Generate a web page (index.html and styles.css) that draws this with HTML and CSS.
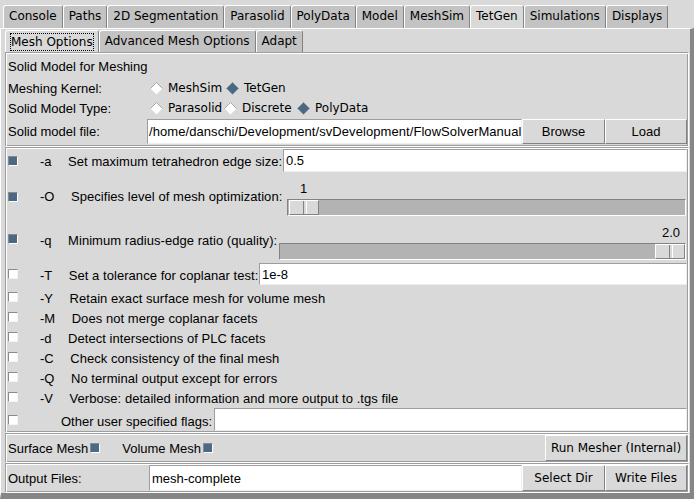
FILE: index.html
```html
<!DOCTYPE html>
<html>
<head>
<meta charset="utf-8">
<link rel="stylesheet" href="styles.css">
</head>
<body>
<div class="app">
  <div class="tabs tabs-main">
    <div class="tab">Console</div>
    <div class="tab">Paths</div>
    <div class="tab">2D Segmentation</div>
    <div class="tab">Parasolid</div>
    <div class="tab">PolyData</div>
    <div class="tab">Model</div>
    <div class="tab">MeshSim</div>
    <div class="tab sel">TetGen</div>
    <div class="tab">Simulations</div>
    <div class="tab">Displays</div>
  </div>
  <div class="pane-main">
    <div class="tabs tabs-sub">
      <div class="tab sel tab-focus"><span class="focus">Mesh Options</span></div>
      <div class="tab">Advanced Mesh Options</div>
      <div class="tab">Adapt</div>
    </div>
    <div class="pane-sub">
      <div class="sec sec-model">
        <div class="row title-row">Solid Model for Meshing</div>
        <div class="row radio-row">
          <span class="lbl">Meshing Kernel:</span>
          <span class="radio r-meshsim"><svg class="dia" width="13" height="13" viewBox="0 0 13 13"><polygon points="6.5,0.5 12.5,6.5 6.5,12.5 0.5,6.5" fill="#fff"/><polyline points="0.5,6.5 6.5,0.5 12.5,6.5" fill="none" stroke="#a8a8a8"/></svg>MeshSim</span>
          <span class="radio"><svg class="dia" width="13" height="13" viewBox="0 0 13 13"><polygon points="6.5,0.5 12.5,6.5 6.5,12.5 0.5,6.5" fill="#4a6984"/><polyline points="0.5,6.5 6.5,0.5 12.5,6.5" fill="none" stroke="#8a8a8a"/></svg>TetGen</span>
        </div>
        <div class="row radio-row">
          <span class="lbl">Solid Model Type:</span>
          <span class="radio r-parasolid"><svg class="dia" width="13" height="13" viewBox="0 0 13 13"><polygon points="6.5,0.5 12.5,6.5 6.5,12.5 0.5,6.5" fill="#fff"/><polyline points="0.5,6.5 6.5,0.5 12.5,6.5" fill="none" stroke="#a8a8a8"/></svg>Parasolid</span>
          <span class="radio r-discrete"><svg class="dia" width="13" height="13" viewBox="0 0 13 13"><polygon points="6.5,0.5 12.5,6.5 6.5,12.5 0.5,6.5" fill="#fff"/><polyline points="0.5,6.5 6.5,0.5 12.5,6.5" fill="none" stroke="#a8a8a8"/></svg>Discrete</span>
          <span class="radio r-polydata"><svg class="dia" width="13" height="13" viewBox="0 0 13 13"><polygon points="6.5,0.5 12.5,6.5 6.5,12.5 0.5,6.5" fill="#4a6984"/><polyline points="0.5,6.5 6.5,0.5 12.5,6.5" fill="none" stroke="#8a8a8a"/></svg>PolyData</span>
        </div>
        <div class="row file-row">
          <span class="lbl lbl-file">Solid model file:</span>
          <div class="entry entry-file">/home/danschi/Development/svDevelopment/FlowSolverManual</div>
          <div class="btn btn-w83">Browse</div>
          <div class="btn btn-w82">Load</div>
        </div>
      </div>

      <div class="sec sec-opts">
        <div class="row opt-a">
          <span class="cb on"></span><span class="flag">-a</span><span class="desc">Set maximum tetrahedron edge size:</span>
          <div class="entry entry-a">0.5</div>
        </div>
        <div class="row opt-scale opt-O">
          <span class="cb on"></span><span class="flag">-O</span><span class="desc">Specifies level of mesh optimization:</span>
          <div class="scale scale-O">
            <div class="scale-val"><span class="val val-O">1</span></div>
            <div class="trough"><div class="slider slider-min"></div></div>
          </div>
        </div>
        <div class="row opt-scale opt-q">
          <span class="cb on"></span><span class="flag">-q</span><span class="desc">Minimum radius-edge ratio (quality):</span>
          <div class="scale scale-q">
            <div class="scale-val"><span class="val val-q">2.0</span></div>
            <div class="trough"><div class="slider slider-max"></div></div>
          </div>
        </div>
        <div class="row opt-T">
          <span class="cb"></span><span class="flag">-T</span><span class="desc">Set a tolerance for coplanar test:</span>
          <div class="entry entry-T">1e-8</div>
        </div>
        <div class="row opt-line"><span class="cb"></span><span class="flag">-Y</span><span class="desc">Retain exact surface mesh for volume mesh</span></div>
        <div class="row opt-line"><span class="cb"></span><span class="flag">-M</span><span class="desc">Does not merge coplanar facets</span></div>
        <div class="row opt-line"><span class="cb"></span><span class="flag">-d</span><span class="desc">Detect intersections of PLC facets</span></div>
        <div class="row opt-line"><span class="cb"></span><span class="flag">-C</span><span class="desc">Check consistency of the final mesh</span></div>
        <div class="row opt-line"><span class="cb"></span><span class="flag">-Q</span><span class="desc">No terminal output except for errors</span></div>
        <div class="row opt-line"><span class="cb"></span><span class="flag">-V</span><span class="desc">Verbose: detailed information and more output to .tgs file</span></div>
        <div class="row opt-other">
          <span class="cb"></span><span class="other-lbl">Other user specified flags:</span>
          <div class="entry entry-other"></div>
        </div>
      </div>

      <div class="sec sec-run">
        <div class="row run-row">
          <span class="mesh-lbl">Surface Mesh</span><span class="cb on"></span>
          <span class="mesh-lbl vol">Volume Mesh</span><span class="cb on"></span>
          <div class="btn btn-dv btn-run">Run Mesher (Internal)</div>
        </div>
      </div>

      <div class="sec sec-out">
        <div class="row out-row">
          <span class="lbl lbl-out">Output Files:</span>
          <div class="entry entry-out">mesh-complete</div>
          <div class="btn btn-dv btn-w83">Select Dir</div>
          <div class="btn btn-dv btn-w82">Write Files</div>
        </div>
      </div>
    </div>
  </div>
</div>
</body>
</html>
```
FILE: styles.css
```css
* { box-sizing: border-box; }
html, body { margin: 0; padding: 0; }
body {
  background: #d9d9d9;
  width: 694px;
  height: 499px;
  overflow: hidden;
  font-family: "Liberation Sans", Arial, sans-serif;
  font-size: 13px;
  color: #000;
}
.app { width: 694px; height: 499px; display: flex; flex-direction: column; }

/* tabs */
.tabs { display: flex; font-family: "DejaVu Sans", sans-serif; font-size: 12px; }
.tabs-main { height: 28px; padding: 5px 0 0 3px; flex: none; }
.tabs-sub { height: 23px; padding: 1px 0 0 4px; flex: none; }
.tab {
  height: 23px;
  line-height: 21px;
  padding: 0 5px;
  background: #c3c3c3;
  border-top: 1px solid #fff;
  border-left: 1px solid #fff;
  border-right: 1px solid #828282;
  border-top-left-radius: 3px;
  border-top-right-radius: 3px;
  white-space: nowrap;
}
.tabs-sub .tab { height: 22px; line-height: 20px; }
.tab.sel { background: #d9d9d9; }
.tab-focus { display: flex; align-items: center; padding: 0 4px; }
.focus { outline: 1px dotted #000; outline-offset: -1px; padding: 0 1px; height: 18px; line-height: 18px; }

.pane-main {
  flex: 1;
  display: flex;
  flex-direction: column;
  border-top: 1px solid #fff;
  border-left: 1px solid #fff;
  border-right: 4px solid #868686;
  border-bottom: 6px solid #868686;
}
.pane-sub { flex: 1; margin-left: 4px; margin-right: 1px; display: flex; flex-direction: column; }

/* sections with groove border */
.sec {
  border-top: 1px solid #9d9d9d;
  border-left: 1px solid #9d9d9d;
  border-bottom: 1px solid #fff;
  border-right: 1px solid #fff;
  box-shadow: inset 1px 1px 0 #fff, inset -1px -1px 0 #9d9d9d;
  padding: 1px 1px 1px 2px;
}
.row { display: flex; align-items: center; }

.sec-model { height: 95px; }
.title-row { height: 24px; }
.radio-row { height: 20px; }
.lbl { width: 142px; flex: none; }
.radio { display: inline-flex; align-items: center; font-family: "DejaVu Sans", sans-serif; font-size: 12px; flex: none; }
.r-meshsim { width: 76px; }
.r-parasolid { width: 74px; }
.r-discrete { width: 73px; }
.dia { margin-right: 5px; flex: none; }
.file-row { height: 25px; margin-top: 1px; align-items: stretch; }
.lbl-file { width: 139px; display: flex; align-items: center; }
.entry {
  background: #fff;
  border-top: 1px solid #9d9d9d;
  border-left: 1px solid #9d9d9d;
  border-right: 1px solid #eeeeee;
  border-bottom: 1px solid #eeeeee;
  display: flex;
  align-items: center;
  white-space: nowrap;
  overflow: hidden;
  padding-left: 1px;
  flex: none;
}
.entry-file { width: 375px; letter-spacing: 0.07px; }
.btn {
  background: #d9d9d9;
  border-top: 1px solid #fff;
  border-left: 1px solid #fff;
  border-right: 1px solid #828282;
  border-bottom: 1px solid #828282;
  display: flex;
  align-items: center;
  justify-content: center;
  white-space: nowrap;
  flex: none;
}
.btn-w83 { width: 83px; }
.btn-w82 { width: 82px; }
.btn-dv { font-family: "DejaVu Sans", sans-serif; font-size: 12px; }

/* options */
.sec-opts { height: 286px; }
.cb {
  width: 10px; height: 10px; flex: none;
  background: #fff;
  border-top: 1px solid #8a8a8a;
  border-left: 1px solid #8a8a8a;
  border-right: 1px solid #f4f4f4;
  border-bottom: 1px solid #f4f4f4;
}
.cb.on { background: #4a6984; border-right-color: #fff; border-bottom-color: #fff; }
.flag { margin-left: 22px; margin-right: 16.5px; flex: none; white-space: nowrap; }
.desc { white-space: nowrap; letter-spacing: 0.05px; flex: none; }
.opt-a { height: 23px; align-items: stretch; }
.opt-a .cb { align-self: center; margin-top: 1px; }
.opt-a .flag, .opt-a .desc { display: flex; align-items: center; padding-top: 1px; }
.entry-a { width: 404px; margin-left: auto; padding-left: 2px; }

.opt-scale { align-items: flex-start; }
.opt-O { height: 47px; }
.opt-q { height: 43px; margin-bottom: 1px; }
.opt-O .cb { margin-top: 20px; }
.opt-O .flag, .opt-O .desc { margin-top: 17px; }
.opt-q .cb { margin-top: 15px; }
.opt-q .flag, .opt-q .desc { margin-top: 14px; }
.scale { margin-right: 1px; }
.scale-O { width: 399px; margin-left: auto; margin-top: 9px; flex: none; }
.scale-q { flex: 1 1 auto; min-width: 0; margin-left: 2px; margin-top: 6px; }
.scale-val { height: 16px; position: relative; }
.val { position: absolute; top: 0; line-height: 16px; }
.val-O { left: 13px; }
.val-q { right: 6px; }
.trough {
  margin-top: 2px;
  height: 17px;
  background: #b3b3b3;
  border-top: 1px solid #828282;
  border-left: 1px solid #828282;
  border-right: 1px solid #fff;
  border-bottom: 1px solid #fff;
  position: relative;
}
.slider {
  position: absolute;
  top: 0;
  width: 30px;
  height: 15px;
  background: #d9d9d9;
  border-top: 1px solid #fff;
  border-left: 1px solid #fff;
  border-right: 1px solid #828282;
  border-bottom: 1px solid #828282;
}
.slider-min { left: 1px; }
.slider-max { right: 0; }
.slider::after {
  content: "";
  position: absolute;
  left: 13px;
  top: 0;
  bottom: 0;
  width: 2px;
  border-left: 1px solid #828282;
  border-right: 1px solid #fff;
}

.opt-T { height: 25px; }
.opt-T .cb { margin-top: -3px; }
.entry-T { height: 22px; align-self: flex-start; width: 428px; margin-left: auto; padding-left: 2px; }
.opt-line { height: 20px; }
.opt-line .cb { margin-top: -2px; }
.opt-other { height: 23px; }
.other-lbl { margin-left: 43px; margin-top: 4px; white-space: nowrap; }
.entry-other { height: 23px; width: 473px; margin-left: auto; }

/* run section */
.sec-run { height: 30px; }
.run-row { height: 26px; }
.run-row .cb { margin-top: -1px; margin-left: 2px; }
.mesh-lbl { white-space: nowrap; }
.mesh-lbl.vol { margin-left: 22px; }
.btn-run { width: 142px; height: 26px; margin-left: auto; }

/* output section */
.sec-out { flex: 1; }
.out-row { height: 26px; align-items: stretch; }
.lbl-out { width: 141px; display: flex; align-items: center; }
.entry-out { width: 373px; padding-left: 2px; }
```
